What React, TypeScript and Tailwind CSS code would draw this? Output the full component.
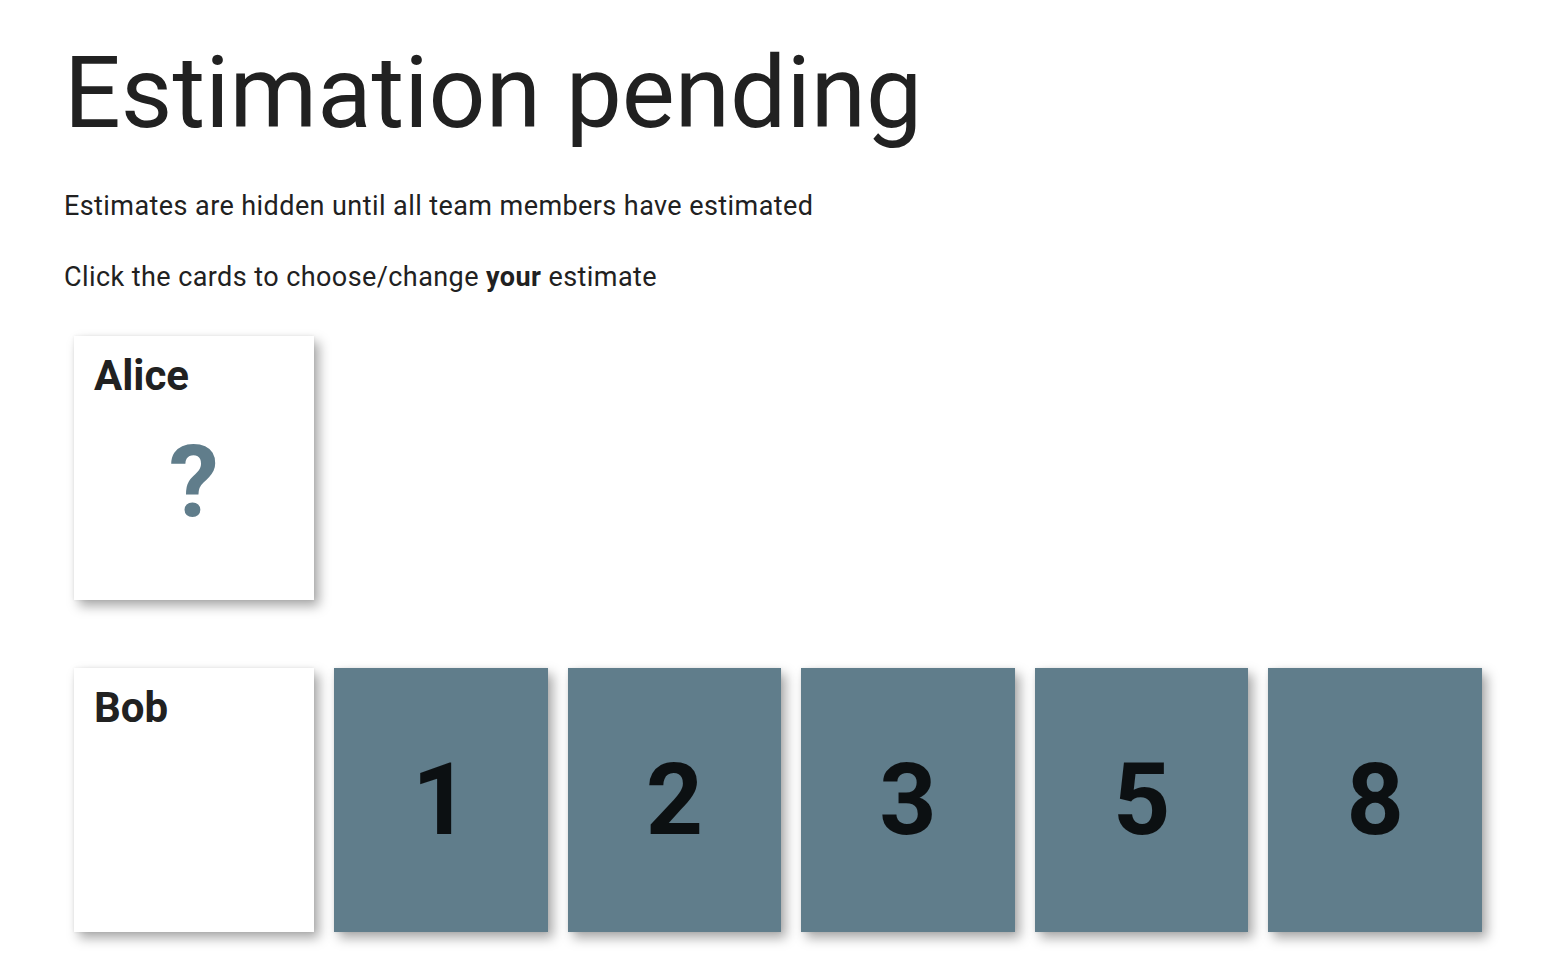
import React from 'react';

const cardShadow = 'shadow-[5px_6px_11px_rgba(0,0,0,0.34),0_0_3px_rgba(0,0,0,0.08)]';

const PlayerCard: React.FC<{ name: string; pending?: boolean }> = ({ name, pending }) => (
  <div className={`m-[10px] w-[240px] h-[264px] shrink-0 bg-white ${cardShadow} flex flex-col px-[20px] pt-[15px]`}>
    <div className="text-[42px] leading-[1.2] font-bold text-[#212121]">{name}</div>
    {pending && (
      <div className="mt-[31px] text-center text-[100px] leading-none font-bold text-[#607d8b]">?</div>
    )}
  </div>
);

const EstimateCard: React.FC<{ value: number }> = ({ value }) => (
  <div className={`m-[10px] flex-1 h-[264px] bg-[#607d8b] ${cardShadow} flex items-center justify-center cursor-pointer`}>
    <span className="text-[100px] leading-none font-bold text-black/[0.87]">{value}</span>
  </div>
);

export default function App() {
  const values = [1, 2, 3, 5, 8];

  return (
    <div className="min-h-screen bg-white font-['Roboto',_'Liberation_Sans',_sans-serif] text-[#212121] pl-[64px] pt-[43px]">
      <h1 className="text-[100px] leading-none font-normal">Estimation pending</h1>

      {/* copy is a touch wider in the reference, hence the tracking */}
      <p className="mt-[44px] text-[27px] leading-[39px] tracking-[0.42px]">
        Estimates are hidden until all team members have estimated
      </p>
      <p className="mt-[32px] text-[27px] leading-[39px] tracking-[0.42px]">
        Click the cards to choose/change <span className="font-bold">your</span> estimate
      </p>

      <div className="w-[1428px] mt-[29px] flex flex-col gap-[48px]">
        <div className="flex">
          <PlayerCard name="Alice" pending />
        </div>
        <div className="flex">
          <PlayerCard name="Bob" />
          {values.map((v) => (
            <EstimateCard key={v} value={v} />
          ))}
        </div>
      </div>
    </div>
  );
}
